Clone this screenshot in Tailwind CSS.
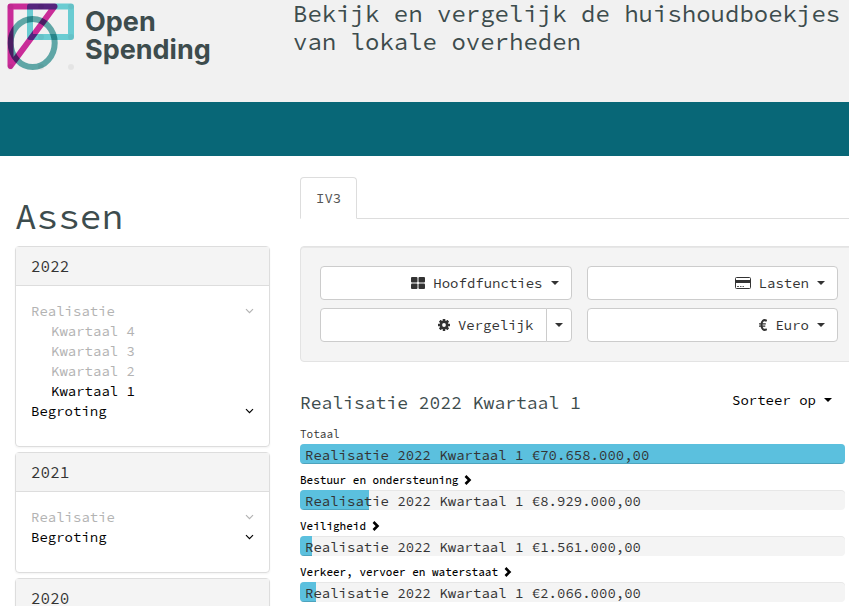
<!DOCTYPE html>
<html lang="nl">
<head>
<meta charset="utf-8">
<meta name="viewport" content="width=device-width, initial-scale=1">
<title>Open Spending - Assen</title>
<script src="https://cdn.jsdelivr.net/npm/@tailwindcss/browser@4"></script>
</head>
<body class="overflow-x-hidden bg-white font-['Source_Code_Pro','Liberation_Mono',monospace] text-sm leading-5 text-[#333]">
<svg class="hidden" aria-hidden="true">
  <symbol id="chev" viewBox="0 0 9 10"><path d="M1 3.2 4.5 6.7 8 3.2" fill="none" stroke="currentColor" stroke-width="1.2"/></symbol>
  <symbol id="caret" viewBox="0 0 8 4"><path d="M0 0h8L4 4z" fill="currentColor"/></symbol>
  <symbol id="next" viewBox="0 0 8 10"><path d="M1.5 1 5.500 5 1.500 9" fill="none" stroke="currentColor" stroke-width="2.600"/></symbol>
</svg>
<header class="flex h-[102px] bg-[#f1f1f1] text-[#3d4c4d]">
  <a href="#" class="flex w-[293px] shrink-0 items-start">
    <svg class="isolate h-[76px] w-[78px] shrink-0" viewBox="0 0 78 76" fill="none" aria-hidden="true">
      <g stroke-width="6" stroke-linejoin="round">
        <rect x="30" y="6.500" width="41" height="30.500" stroke="#6accd2"/>
        <ellipse cx="32.700" cy="43" rx="22" ry="24" stroke="#5fa6a6" class="mix-blend-multiply"/>
        <path d="M10.500 6.500H54.500L10.500 66z" stroke="#c92c98" class="mix-blend-multiply"/>
      </g>
      <g fill="#000" fill-opacity=".05">
        <circle cx="10.500" cy="6.500" r="3"/><circle cx="41" cy="6.500" r="3"/><circle cx="71" cy="6.500" r="3"/>
        <circle cx="10.500" cy="37" r="3"/><circle cx="41" cy="37" r="3"/><circle cx="71" cy="37" r="3"/>
        <circle cx="10.500" cy="67" r="3"/><circle cx="41" cy="67" r="3"/><circle cx="71" cy="67" r="3"/>
      </g>
    </svg>
    <span class="pt-2 pl-[7px] font-['Inter',sans-serif] text-[27px] leading-7 font-bold">Open<br>Spending</span>
  </a>
  <p class="text-2xl leading-7">Bekijk en vergelijk de huishoudboekjes<br>van lokale overheden</p>
</header>
<nav class="h-[54px] bg-[#086777]" aria-label="Hoofdmenu"></nav>

<div class="flex">
  <aside class="w-[285px] shrink-0 px-[15px] pt-[41px]">
    <h1 class="mb-[9px] text-4xl leading-10 text-[#3d4c4d]">Assen</h1>
    <section class="mb-[5px] rounded border border-[#ddd] shadow-xs">
      <h2 class="border-b border-[#ddd] bg-[#f4f4f4] px-[15px] py-[9px] text-base leading-5">2022</h2>
      <div class="px-[15px] pt-[15px] pb-[25px]">
        <a href="#" class="flex items-center justify-between text-[#b3b3b3]">Realisatie<svg class="h-2.5 w-[9px]"><use href="#chev"/></svg></a>
        <ul class="pl-5 text-[#b3b3b3]">
          <li><a href="#">Kwartaal 4</a></li>
          <li><a href="#">Kwartaal 3</a></li>
          <li><a href="#">Kwartaal 2</a></li>
          <li><a href="#" class="text-black">Kwartaal 1</a></li>
        </ul>
        <a href="#" class="flex items-center justify-between text-black">Begroting<svg class="h-2.5 w-[9px]"><use href="#chev"/></svg></a>
      </div>
    </section>
    <section class="mb-[5px] rounded border border-[#ddd] shadow-xs">
      <h2 class="border-b border-[#ddd] bg-[#f4f4f4] px-[15px] py-[9px] text-base leading-5">2021</h2>
      <div class="px-[15px] pt-[15px] pb-[25px]">
        <a href="#" class="flex items-center justify-between text-[#b3b3b3]">Realisatie<svg class="h-2.5 w-[9px]"><use href="#chev"/></svg></a>
        <a href="#" class="flex items-center justify-between text-black">Begroting<svg class="h-2.5 w-[9px]"><use href="#chev"/></svg></a>
      </div>
    </section>
    <section class="rounded border border-[#ddd] shadow-xs">
      <h2 class="border-b border-[#ddd] bg-[#f4f4f4] px-[15px] py-[9px] text-base leading-5">2020</h2>
    </section>
  </aside>

  <main class="min-w-0 flex-1 pt-[21px] pl-[15px]">
    <div class="mb-[27px] flex border-b border-[#ddd]">
      <a href="#" class="-mb-px rounded-t border border-[#ddd] border-b-white bg-white px-[15px] py-[10px] text-[#555]">IV3</a>
    </div>
    <div class="-mr-[9px] grid grid-cols-2 gap-x-[15px] gap-y-2 rounded-sm border border-[#e3e3e3] bg-[#f4f4f4] p-[19px] text-[#333] inset-shadow-2xs">
      <button class="flex h-[34px] items-center justify-end gap-2 rounded border border-[#ccc] bg-white px-3">
        <svg class="size-[14px]" viewBox="0 0 14 14" fill="currentColor"><rect y="1" width="6.500" height="5.500" rx="1"/><rect x="7.500" y="1" width="6.500" height="5.500" rx="1"/><rect y="7.500" width="6.500" height="5.500" rx="1"/><rect x="7.500" y="7.500" width="6.500" height="5.500" rx="1"/></svg>
        Hoofdfuncties
        <svg class="h-1 w-2"><use href="#caret"/></svg>
      </button>
      <button class="flex h-[34px] items-center justify-end gap-2 rounded border border-[#ccc] bg-white px-3">
        <svg class="h-[14px] w-4" viewBox="0 0 16 14"><rect x=".5" y="1.500" width="15" height="11" rx="1" fill="none" stroke="currentColor"/><path d="M1 4h14v3H1z" fill="currentColor"/><path d="M2 10.500h2m1 0h1.500m1 0H9" stroke="currentColor" stroke-width=".8"/></svg>
        Lasten
        <svg class="h-1 w-2"><use href="#caret"/></svg>
      </button>
      <div class="flex h-[34px]">
        <button class="flex flex-1 items-center justify-end gap-2 rounded-l border border-[#ccc] bg-white px-3">
          <svg class="size-3" viewBox="-6 -6 12 12"><g fill="currentColor"><rect x="-1.300" y="-6" width="2.600" height="12" rx=".4"/><rect x="-1.300" y="-6" width="2.600" height="12" rx=".4" transform="rotate(45)"/><rect x="-1.300" y="-6" width="2.600" height="12" rx=".4" transform="rotate(90)"/><rect x="-1.300" y="-6" width="2.600" height="12" rx=".4" transform="rotate(135)"/><circle r="4.400"/></g><circle r="1.900" fill="#fff"/></svg>
          Vergelijk
        </button>
        <button aria-label="Meer opties" class="-ml-px flex items-center rounded-r border border-[#ccc] bg-white px-2"><svg class="h-1 w-2"><use href="#caret"/></svg></button>
      </div>
      <button class="flex h-[34px] items-center justify-end gap-2 rounded border border-[#ccc] bg-white px-3">
        <svg class="h-3 w-2" viewBox="0 0 8 12" fill="none" stroke="currentColor"><path d="M7.800 1.800C4.500 0 2.500 2 2.500 6s2 6 5.300 4.200" stroke-width="2"/><path d="M0 4.800h6.800M0 7.200h6.300" stroke-width="1.300"/></svg>
        Euro
        <svg class="h-1 w-2"><use href="#caret"/></svg>
      </button>
    </div>

    <div class="mt-7 mr-[17px] flex items-start justify-between">
      <h2 class="pt-[3px] text-lg leading-5 text-[#3d4c4d]">Realisatie 2022 Kwartaal 1</h2>
      <button class="flex items-center gap-2 text-black">Sorteer op<svg class="h-1 w-2"><use href="#caret"/></svg></button>
    </div>

    <div class="mt-[11px] mr-1 flex flex-col gap-1.5">
      <div>
        <div class="text-[11px] leading-5">Totaal</div>
        <div class="grid h-5 overflow-hidden rounded bg-[#f4f4f4] inset-shadow-2xs">
          <div class="col-start-1 row-start-1 h-5 border-b border-black/15 bg-[#5bc0de]" style="width:100%"></div>
          <div class="col-start-1 row-start-1 pt-px pl-[5px]">Realisatie 2022 Kwartaal 1 €70.658.000,00</div>
        </div>
      </div>
      <div>
        <a href="#" class="flex items-center gap-1.5 text-[11px] leading-5 font-medium text-black">Bestuur en ondersteuning<svg class="h-2.5 w-2"><use href="#next"/></svg></a>
        <div class="grid h-5 overflow-hidden rounded bg-[#f4f4f4] inset-shadow-2xs">
          <div class="col-start-1 row-start-1 h-5 border-b border-black/15 bg-[#5bc0de]" style="width:12.64%"></div>
          <div class="col-start-1 row-start-1 pt-px pl-[5px]">Realisatie 2022 Kwartaal 1 €8.929.000,00</div>
        </div>
      </div>
      <div>
        <a href="#" class="flex items-center gap-1.5 text-[11px] leading-5 font-medium text-black">Veiligheid<svg class="h-2.5 w-2"><use href="#next"/></svg></a>
        <div class="grid h-5 overflow-hidden rounded bg-[#f4f4f4] inset-shadow-2xs">
          <div class="col-start-1 row-start-1 h-5 border-b border-black/15 bg-[#5bc0de]" style="width:2.21%"></div>
          <div class="col-start-1 row-start-1 pt-px pl-[5px]">Realisatie 2022 Kwartaal 1 €1.561.000,00</div>
        </div>
      </div>
      <div>
        <a href="#" class="flex items-center gap-1.5 text-[11px] leading-5 font-medium text-black">Verkeer, vervoer en waterstaat<svg class="h-2.5 w-2"><use href="#next"/></svg></a>
        <div class="grid h-5 overflow-hidden rounded bg-[#f4f4f4] inset-shadow-2xs">
          <div class="col-start-1 row-start-1 h-5 border-b border-black/15 bg-[#5bc0de]" style="width:2.92%"></div>
          <div class="col-start-1 row-start-1 pt-px pl-[5px]">Realisatie 2022 Kwartaal 1 €2.066.000,00</div>
        </div>
      </div>
    </div>
  </main>
</div>
</body>
</html>
